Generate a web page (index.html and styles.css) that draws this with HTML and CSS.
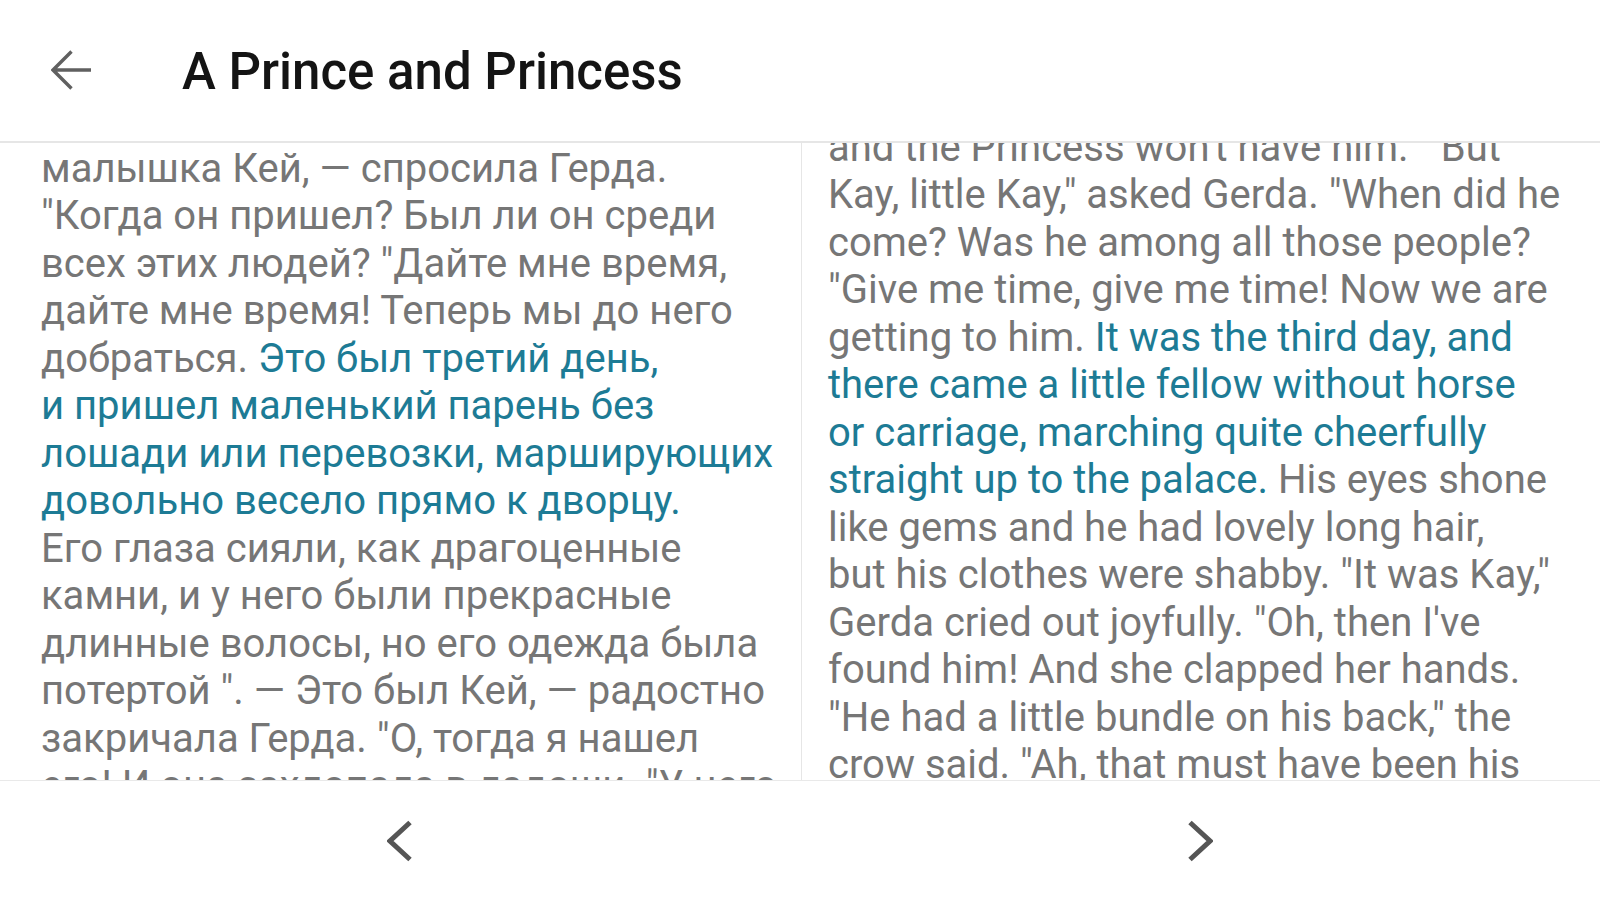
FILE: index.html
```html
<!DOCTYPE html>
<html lang="ru">
<head>
<meta charset="utf-8">
<title>A Prince and Princess</title>
<link rel="stylesheet" href="styles.css">
</head>
<body>
<div class="app">
  <header class="topbar">
    <button class="back" aria-label="Back">
      <svg class="back-icon" viewBox="0 0 41 41" width="41" height="41">
        <path d="M40 20H2.5M20.5 1.5L2 20l18.5 18.5" fill="none" stroke="#606060" stroke-width="3.4"/>
      </svg>
    </button>
    <h1 class="title">A Prince and Princess</h1>
  </header>
  <main class="pages">
    <section class="page page-left">
      <p class="text text-left">и Принцесса за него не выйдет». — Но Кей,<br>малышка Кей, — спросила Герда.<br>"Когда он пришел? Был ли он среди<br>всех этих людей? "Дайте мне время,<br>дайте мне время! Теперь мы до него<br>добраться. <span class="hl">Это был третий день,<br>и пришел маленький парень без<br>лошади или перевозки, марширующих<br>довольно весело прямо к дворцу.</span><br>Его глаза сияли, как драгоценные<br>камни, и у него были прекрасные<br>длинные волосы, но его одежда была<br>потертой ". — Это был Кей, — радостно<br>закричала Герда. "О, тогда я нашел<br>его! И она захлопала в ладоши. "У него</p>
    </section>
    <section class="page page-right">
      <p class="text text-right">and the Princess won't have him." "But<br>Kay, little Kay," asked Gerda. "When did he<br>come? Was he among all those people?<br>"Give me time, give me time! Now we are<br>getting to him. <span class="hl">It was the third day, and<br>there came a little fellow without horse<br>or carriage, marching quite cheerfully<br>straight up to the palace.</span> His eyes shone<br>like gems and he had lovely long hair,<br>but his clothes were shabby. "It was Kay,"<br>Gerda cried out joyfully. "Oh, then I've<br>found him! And she clapped her hands.<br>"He had a little bundle on his back," the<br>crow said. "Ah, that must have been his<br>knapsack," said Gerda.</p>
    </section>
  </main>
  <footer class="nav">
    <button class="nav-btn" aria-label="Previous page">
      <svg viewBox="0 0 26 42" width="26" height="42">
        <path d="M23 2.5L3 21l20 18.5" fill="none" stroke="#555" stroke-width="5"/>
      </svg>
    </button>
    <button class="nav-btn" aria-label="Next page">
      <svg viewBox="0 0 26 42" width="26" height="42">
        <path d="M3 2.5L23 21 3 39.5" fill="none" stroke="#555" stroke-width="5"/>
      </svg>
    </button>
  </footer>
</div>
</body>
</html>
```

FILE: styles.css
```css
* {
  box-sizing: border-box;
}

html, body {
  margin: 0;
  padding: 0;
  background: #ffffff;
}

body {
  font-family: Roboto, "Noto Sans", "Liberation Sans", sans-serif;
  width: 1600px;
  height: 900px;
  overflow: hidden;
}

.app {
  display: flex;
  flex-direction: column;
  height: 900px;
}

.topbar {
  flex: 0 0 143px;
  display: flex;
  align-items: center;
  padding-left: 51px;
  padding-bottom: 1px;
  background: #ffffff;
  border-bottom: 2px solid #e6e6e6;
}

.back {
  display: flex;
  width: 41px;
  height: 41px;
  padding: 0;
  border: 0;
  background: none;
}

.back-icon {
  display: block;
}

.title {
  margin: 3px 0 0 90px;
  font-size: 51px;
  font-weight: 500;
  color: #141414;
  line-height: 1;
}

.pages {
  flex: 1 1 auto;
  display: flex;
  overflow: hidden;
  min-height: 0;
}

.page {
  overflow: hidden;
}

.page-left {
  flex: 0 0 802px;
  padding-left: 41px;
  border-right: 1px solid #e6e6e6;
}

.page-right {
  flex: 1 1 auto;
  padding-left: 26px;
}

.text {
  margin: 0;
  font-size: 40px;
  line-height: 47.5px;
  color: #767676;
  white-space: nowrap;
}

.text-left {
  margin-top: -46px;
}

.text-right {
  margin-top: -19.5px;
}

.hl {
  color: #1d7b95;
}

.nav {
  flex: 0 0 120px;
  display: grid;
  grid-template-columns: 1fr 1fr;
  border-top: 1px solid #e9e9e9;
  background: #ffffff;
}

.nav-btn {
  display: flex;
  align-items: center;
  justify-content: center;
  padding: 0;
  border: 0;
  background: none;
}

.nav-btn svg {
  display: block;
}
```
